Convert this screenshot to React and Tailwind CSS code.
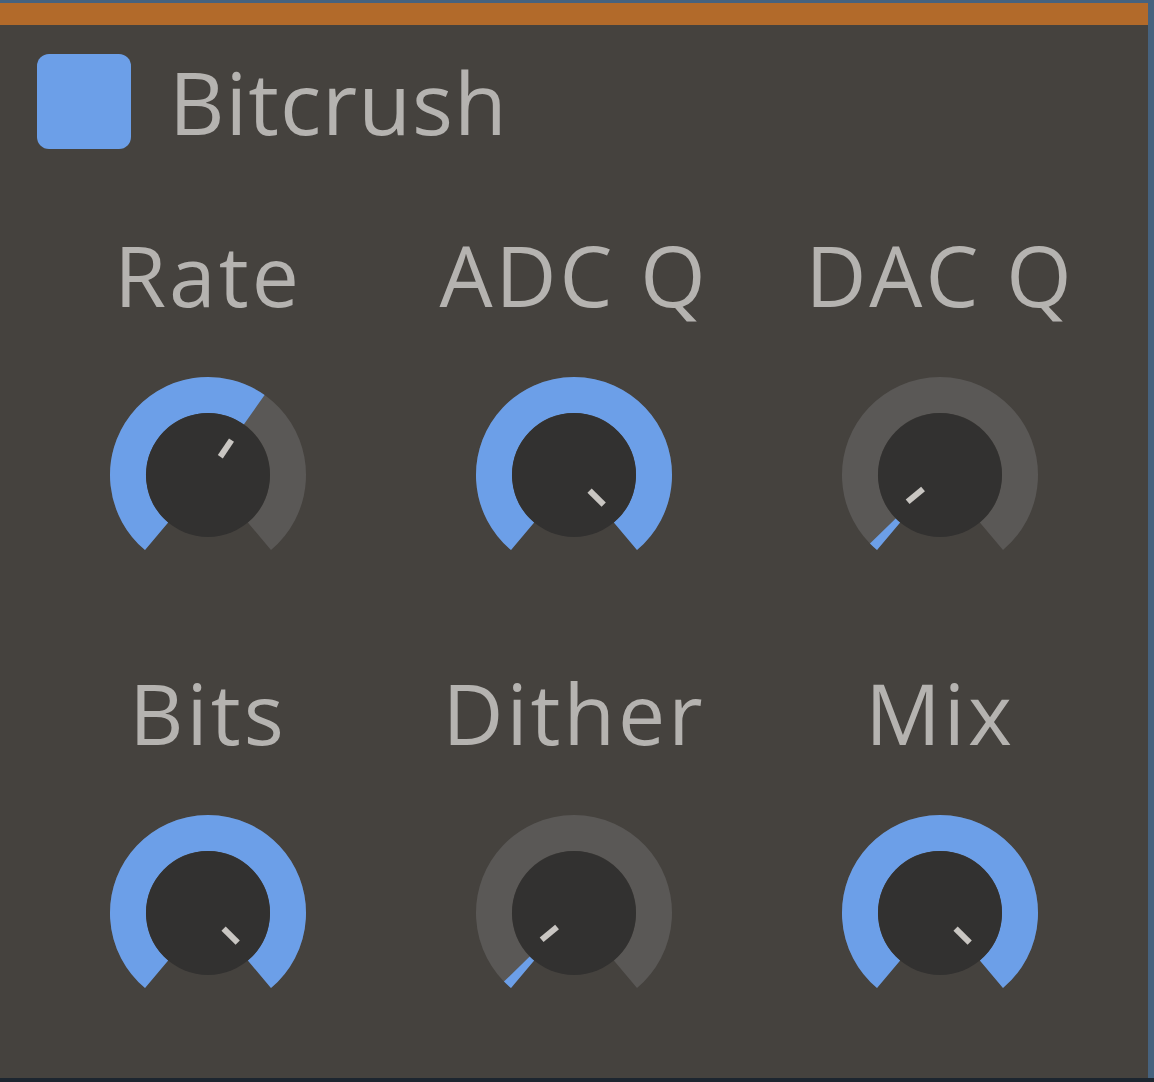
const BLUE = "#6c9fe8";
const TRACK = "#5a5856";
const SWEEP = 140;

// knob values 0..1; the ring spans -140..140deg, the pointer -135..135deg
const rows = [
  [
    { label: "Rate", value: 0.626 },
    { label: "ADC Q", value: 1 },
    { label: "DAC Q", value: 0.02 },
  ],
  [
    { label: "Bits", value: 1 },
    { label: "Dither", value: 0.02 },
    { label: "Mix", value: 1 },
  ],
];

function polar(r, deg) {
  const a = (deg * Math.PI) / 180;
  return [100 + r * Math.sin(a), 100 - r * Math.cos(a)];
}

function arcPath(r, from, to) {
  const [x1, y1] = polar(r, from);
  const [x2, y2] = polar(r, to);
  const large = to - from > 180 ? 1 : 0;
  return `M ${x1} ${y1} A ${r} ${r} 0 ${large} 1 ${x2} ${y2}`;
}

function Knob({ value }) {
  const end = -SWEEP + 2 * SWEEP * value;
  const pointer = -135 + 270 * value;
  const [tx1, ty1] = polar(22, pointer);
  const [tx2, ty2] = polar(42, pointer);
  return (
    <svg width="200" height="200" viewBox="0 0 200 200">
      <path d={arcPath(80, -SWEEP, SWEEP)} fill="none" stroke={TRACK} strokeWidth="36" />
      <path d={arcPath(80, -SWEEP, end)} fill="none" stroke={BLUE} strokeWidth="36" />
      <circle cx="100" cy="100" r="62" fill="#323130" />
      <line x1={tx1} y1={ty1} x2={tx2} y2={ty2} stroke="#c9c6c2" strokeWidth="6" />
    </svg>
  );
}

function KnobCell({ label, value }) {
  return (
    <div className="flex flex-col items-center">
      <div className="text-[84px] leading-none tracking-[3px] text-[#b5b3b0] whitespace-nowrap">{label}</div>
      <div className="mt-[58px]">
        <Knob value={value} />
      </div>
    </div>
  );
}

export default function App() {
  return (
    <div className="flex h-[1082px] w-[1154px] flex-col bg-[#46627e] font-['Open_Sans',sans-serif]">
      <div className="flex flex-1 flex-col pt-[3px] pr-[6px]">
        <div className="flex flex-1 flex-col bg-[#45423e]">
          <div className="h-[22px] bg-[#b26a2a]" />

          {/* header */}
          <div className="mt-[29px] flex items-center pl-[37px]">
            <div className="h-[95px] w-[94px] rounded-[12px] bg-[#6c9fe8]" />
            <div className="ml-[38px] text-[86px] leading-none tracking-[1px] text-[#b5b3b0]">Bitcrush</div>
          </div>

          {/* knobs */}
          <div className="mt-[84px] flex flex-col gap-[96px] px-[25px]">
            {rows.map((row, i) => (
              <div key={i} className="grid grid-cols-3">
                {row.map((k) => (
                  <KnobCell key={k.label} {...k} />
                ))}
              </div>
            ))}
          </div>
        </div>
      </div>
      <div className="h-[4px] bg-[#1d2630]" />
    </div>
  );
}
